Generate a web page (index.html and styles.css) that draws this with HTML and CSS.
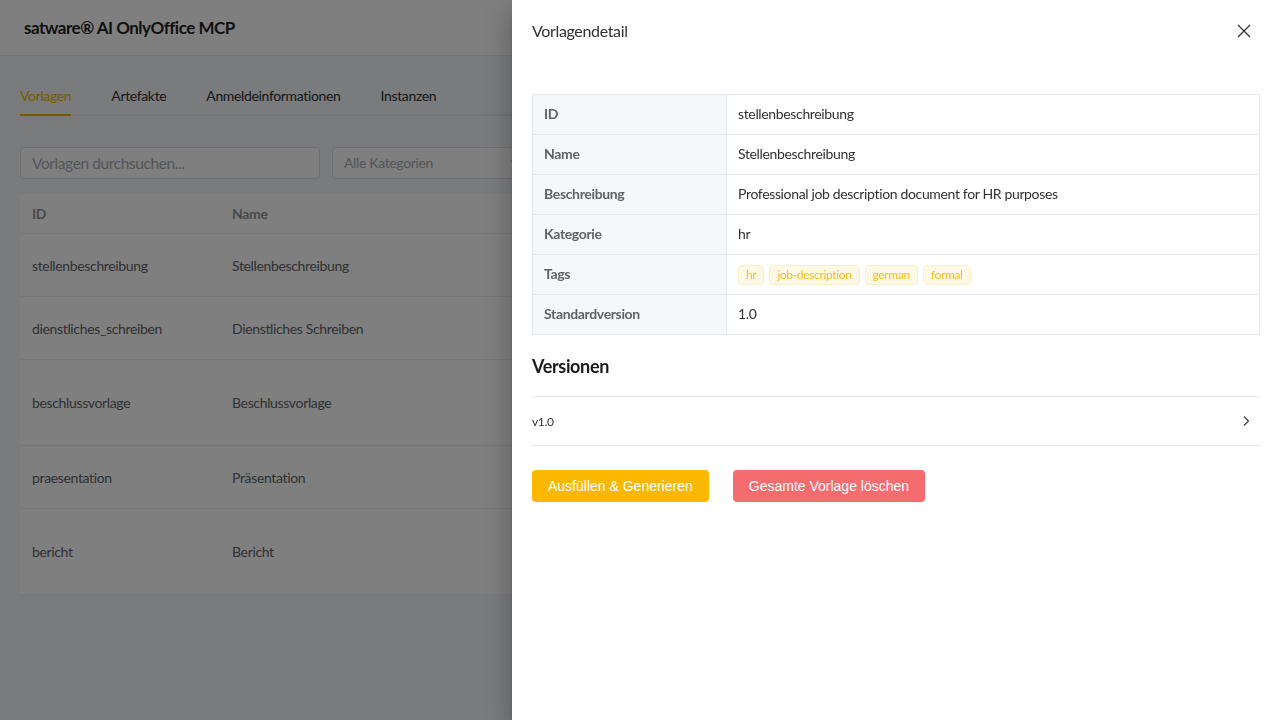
FILE: index.html
```html
<!DOCTYPE html>
<html lang="de">
<head>
    <meta charset="UTF-8">
    <meta name="viewport" content="width=device-width, initial-scale=1.0">
    <title>satware® AI OnlyOffice MCP</title>
    <link rel="stylesheet" href="styles.css">
</head>
<body>
    <header class="topbar">
        <h1 class="brand">satware® AI OnlyOffice MCP</h1>
    </header>

    <main class="page">
        <nav class="tabs">
            <a class="tab active">Vorlagen</a>
            <a class="tab">Artefakte</a>
            <a class="tab">Anmeldeinformationen</a>
            <a class="tab">Instanzen</a>
        </nav>

        <div class="filters">
            <input class="search" type="text" placeholder="Vorlagen durchsuchen...">
            <div class="select">
                <span>Alle Kategorien</span>
                <svg width="12" height="12" viewBox="0 0 12 12"><path d="M2.5 4.5 6 8l3.5-3.5" fill="none" stroke="#a8abb2" stroke-width="1.2"/></svg>
            </div>
        </div>

        <table class="list">
            <thead>
                <tr><th class="col-id">ID</th><th>Name</th></tr>
            </thead>
            <tbody>
                <tr><td>stellenbeschreibung</td><td>Stellenbeschreibung</td></tr>
                <tr><td>dienstliches_schreiben</td><td>Dienstliches Schreiben</td></tr>
                <tr class="tall"><td>beschlussvorlage</td><td>Beschlussvorlage</td></tr>
                <tr><td>praesentation</td><td>Präsentation</td></tr>
                <tr class="tall"><td>bericht</td><td>Bericht</td></tr>
            </tbody>
        </table>
    </main>

    <div class="overlay"></div>

    <aside class="drawer">
        <div class="drawer-head">
            <span class="drawer-title">Vorlagendetail</span>
            <svg class="close" width="14" height="14" viewBox="0 0 14 14"><path d="M1 1 13 13M13 1 1 13" stroke="#303133" stroke-width="1.3"/></svg>
        </div>

        <div class="drawer-body">
            <table class="details">
                <tr><th>ID</th><td>stellenbeschreibung</td></tr>
                <tr><th>Name</th><td>Stellenbeschreibung</td></tr>
                <tr><th>Beschreibung</th><td>Professional job description document for HR purposes</td></tr>
                <tr><th>Kategorie</th><td>hr</td></tr>
                <tr><th>Tags</th><td class="tags">
                    <span class="tag">hr</span><span class="tag">job-description</span><span class="tag">german</span><span class="tag">formal</span>
                </td></tr>
                <tr><th>Standardversion</th><td>1.0</td></tr>
            </table>

            <h3 class="section">Versionen</h3>
            <div class="versions">
                <div class="version">
                    <span>v1.0</span>
                    <svg width="12" height="12" viewBox="0 0 12 12"><path d="M4 1.5 8.5 6 4 10.5" fill="none" stroke="#303133" stroke-width="1.1"/></svg>
                </div>
            </div>

            <div class="actions">
                <button class="btn btn-primary">Ausfüllen &amp; Generieren</button>
                <button class="btn btn-danger">Gesamte Vorlage löschen</button>
            </div>
        </div>
    </aside>
</body>
</html>
```

FILE: styles.css
```css
body {
    margin: 0;
    padding: 0;
    font-family: Lato, "Noto Sans", sans-serif;
    font-size: 14px;
    letter-spacing: -0.35px;
    color: #303133;
    background: #f5f6f9;
}

.topbar {
    height: 55px;
    display: flex;
    align-items: center;
    padding: 0 24px;
    background: #fff;
    border-bottom: 1px solid #e4e7ed;
}

.brand {
    margin: 0;
    font-size: 17px;
    font-weight: 700;
    letter-spacing: -0.5px;
    color: #1f1f1f;
}

.page {
    padding: 20px;
}

.tabs {
    display: flex;
    gap: 40px;
    border-bottom: 2px solid #e4e7ed;
}

.tab {
    height: 38px;
    line-height: 40px;
    color: #303133;
    border-bottom: 2px solid transparent;
    margin-bottom: -2px;
}

.tab.active {
    color: #f5b400;
    border-bottom-color: #f5b400;
}

.filters {
    display: flex;
    gap: 12px;
    margin-top: 31px;
}

.search {
    box-sizing: border-box;
    width: 300px;
    height: 32px;
    padding: 0 11px;
    border: 1px solid #dcdfe6;
    border-radius: 4px;
    font-family: Lato, "Noto Sans", sans-serif;
    font-size: 15.5px;
    letter-spacing: -0.4px;
    background: #fff;
}

.search::placeholder {
    color: #a8abb2;
}

.select {
    box-sizing: border-box;
    width: 200px;
    height: 32px;
    padding: 0 10px 2px 11px;
    display: flex;
    align-items: center;
    justify-content: space-between;
    border: 1px solid #dcdfe6;
    border-radius: 4px;
    background: #fff;
    color: #a8abb2;
}

.list {
    margin-top: 15px;
    width: 100%;
    border-collapse: collapse;
    background: #fff;
}

.list th,
.list td {
    text-align: left;
    padding: 0 12px;
    border-bottom: 1px solid #ebeef5;
    color: #606266;
}

.list th {
    height: 39px;
    font-weight: 700;
    color: #909399;
}

.list td {
    height: 62px;
}

.list tr.tall td {
    height: 85px;
}

.list .col-id {
    width: 176px;
}

.overlay {
    position: fixed;
    inset: 0;
    background: rgba(0, 0, 0, .5);
}

.drawer {
    position: fixed;
    top: 0;
    right: 0;
    bottom: 0;
    width: 768px;
    background: #fff;
    box-shadow: 0 8px 10px -5px rgba(0, 0, 0, .2), 0 16px 24px 2px rgba(0, 0, 0, .14), 0 6px 30px 5px rgba(0, 0, 0, .12);
}

.drawer-head {
    display: flex;
    align-items: center;
    justify-content: space-between;
    padding: 19px 20px 0;
    height: 22px;
}

.drawer-title {
    font-size: 16px;
    color: #303133;
}

.close {
    margin-right: 9px;
    margin-top: 2px;
}

.drawer-body {
    padding: 53px 20px 20px;
}

.details {
    width: 100%;
    border-collapse: collapse;
}

.details th,
.details td {
    box-sizing: border-box;
    height: 40px;
    padding: 0 11px 2px;
    border: 1px solid #e4e7ed;
    text-align: left;
}

.details th {
    width: 194px;
    background: #f5f7fa;
    color: #606266;
    font-weight: 700;
}

.details td {
    color: #303133;
}

.details td.tags {
    padding-bottom: 0;
}

.tag {
    display: inline-block;
    height: 18px;
    line-height: 18px;
    padding: 0 7px;
    margin-right: 5px;
    font-size: 12px;
    color: #f6be1c;
    background: #fef8e6;
    border: 1px solid #fdefc6;
    border-radius: 4px;
    vertical-align: middle;
}

.section {
    margin: 20px 0 19px;
    font-size: 18px;
    font-weight: 700;
    color: #1a1a1a;
}

.versions {
    border-top: 1px solid #e4e7ed;
    border-bottom: 1px solid #e4e7ed;
}

.version {
    height: 48px;
    display: flex;
    align-items: center;
    justify-content: space-between;
    padding-right: 8px;
    font-size: 12px;
}

.actions {
    display: flex;
    gap: 24px;
    margin-top: 24px;
}

.btn {
    display: inline-flex;
    align-items: center;
    height: 32px;
    padding: 0 16px;
    border: none;
    border-radius: 4px;
    color: #fff;
    font-family: "Liberation Sans", Arial, sans-serif;
    font-size: 14px;
    line-height: 16px;
    letter-spacing: 0;
}

.btn-primary {
    background: #fbb800;
}

.btn-danger {
    background: #f46c6e;
}
```
